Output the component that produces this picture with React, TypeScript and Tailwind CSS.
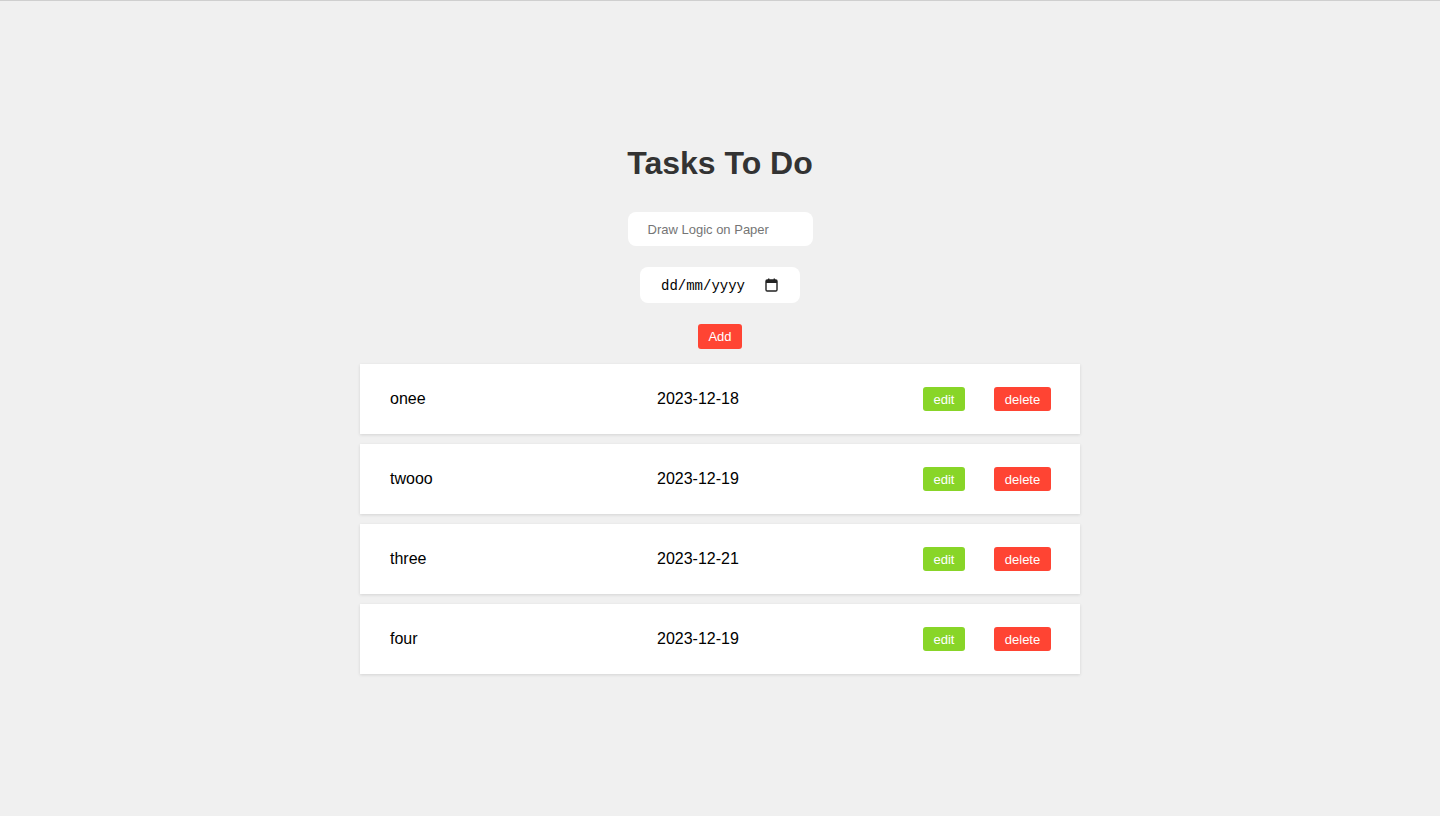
import React from "react";

const tasks = [
  { name: "onee", date: "2023-12-18" },
  { name: "twooo", date: "2023-12-19" },
  { name: "three", date: "2023-12-21" },
  { name: "four", date: "2023-12-19" },
];

export default function App() {
  return (
    <div className="min-h-[816px] bg-[#f0f0f0] border-t border-[#cfcfcf] font-['Liberation_Sans',Arial,sans-serif]">
      <div className="flex flex-col items-center pt-[142px]">
        <h1 className="text-[32px] leading-[40px] font-bold text-[#333]">Tasks To Do</h1>

        <div className="mt-[29px] w-[185px] h-[34px] bg-white rounded-[8px] flex items-center pt-[1px] pl-[20px] text-[13px] text-[#757575]">
          Draw Logic on Paper
        </div>

        <div className="mt-[21px] w-[160px] h-[36px] bg-white rounded-[8px] flex items-center pl-[21px] pr-[22px] justify-between">
          <span className="font-['Liberation_Mono',monospace] text-[14px] pt-[2px] text-black">dd/mm/yyyy</span>
          <svg width="13" height="14" viewBox="0 0 13 14" fill="none">
            <rect x="1" y="2" width="11" height="11" rx="1.2" stroke="#222" strokeWidth="1.4" />
            <rect x="1" y="2" width="11" height="3" fill="#222" />
            <rect x="3" y="0.5" width="1.4" height="2.5" fill="#222" />
            <rect x="8.6" y="0.5" width="1.4" height="2.5" fill="#222" />
          </svg>
        </div>

        <button className="mt-[21px] w-[44px] h-[25px] bg-[#ff4433] text-white text-[13px] rounded-[3px]">
          Add
        </button>

        <div className="mt-[15px] w-[720px] flex flex-col gap-[10px]">
          {tasks.map((t) => (
            <div
              key={t.name}
              className="h-[70px] bg-white flex items-center pl-[30px] pr-[29px] shadow-[0_1px_3px_rgba(0,0,0,0.12)]"
            >
              <div className="w-[267px] text-[16px] text-black">{t.name}</div>
              <div className="text-[16px] text-black">{t.date}</div>
              <div className="ml-auto flex items-center gap-[29px]">
                <button className="w-[42px] h-[24px] pt-[1px] bg-[#88d528] text-white text-[13px] rounded-[3px]">
                  edit
                </button>
                <button className="w-[57px] h-[24px] pt-[1px] bg-[#ff4433] text-white text-[13px] rounded-[3px]">
                  delete
                </button>
              </div>
            </div>
          ))}
        </div>
      </div>
    </div>
  );
}
